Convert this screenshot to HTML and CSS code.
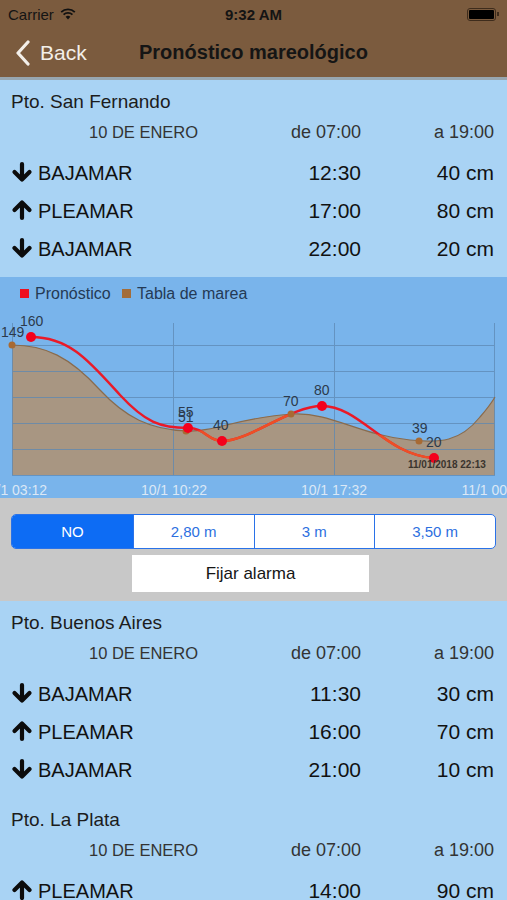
FILE: index.html
```html
<!DOCTYPE html>
<html lang="es">
<head>
    <meta charset="UTF-8">
    <meta name="viewport" content="width=device-width, initial-scale=1.0">
    <title>Pronóstico mareológico</title>
    <link rel="stylesheet" href="styles.css">
</head>
<body>
    <!-- Barra superior -->
    <div class="topbar">
        <div class="status">
            <div class="status-left">
                <span>Carrier</span>
                <svg class="wifi" width="16" height="12" viewBox="0 0 16 12">
                    <path d="M8 11.5 L5.6 8.8 A3.6 3.6 0 0 1 10.4 8.8 Z" fill="#111"/>
                    <path d="M3.6 6.6 A6.4 6.4 0 0 1 12.4 6.6" fill="none" stroke="#111" stroke-width="1.9"/>
                    <path d="M1.2 4.1 A9.8 9.8 0 0 1 14.8 4.1" fill="none" stroke="#111" stroke-width="1.9"/>
                </svg>
            </div>
            <div class="status-time">9:32 AM</div>
            <div class="status-right">
                <div class="battery"><div class="battery-fill"></div></div>
                <div class="battery-tip"></div>
            </div>
        </div>
        <div class="navbar">
            <a class="back" href="#">
                <svg width="16" height="26" viewBox="0 0 16 26">
                    <path d="M13 2 L3 13 L13 24" fill="none" stroke="#f3efe9" stroke-width="3.2" stroke-linecap="round" stroke-linejoin="round"/>
                </svg>
                <span>Back</span>
            </a>
            <div class="nav-title">Pronóstico mareológico</div>
        </div>
    </div>

    <!-- Puerto 1 -->
    <div class="port">
        <div class="port-name">Pto. San Fernando</div>
        <div class="date-row">
            <span class="date-label">10 DE ENERO</span>
            <span class="num">de 07:00</span>
            <span class="num">a 19:00</span>
        </div>
        <div class="tide-row">
            <span class="tide-label"><svg class="arrow" viewBox="0 0 22 22"><path d="M11 3 V18 M3.5 11 L11 18.5 L18.5 11" /></svg>BAJAMAR</span>
            <span class="num">12:30</span>
            <span class="num">40 cm</span>
        </div>
        <div class="tide-row">
            <span class="tide-label"><svg class="arrow" viewBox="0 0 22 22"><path d="M11 19 V4 M3.5 11 L11 3.5 L18.5 11" /></svg>PLEAMAR</span>
            <span class="num">17:00</span>
            <span class="num">80 cm</span>
        </div>
        <div class="tide-row">
            <span class="tide-label"><svg class="arrow" viewBox="0 0 22 22"><path d="M11 3 V18 M3.5 11 L11 18.5 L18.5 11" /></svg>BAJAMAR</span>
            <span class="num">22:00</span>
            <span class="num">20 cm</span>
        </div>
    </div>

    <!-- Grafico -->
    <div class="chart">
        <svg width="507" height="221" viewBox="0 0 507 221">
            <defs>
                <clipPath id="bajo-marea">
                    <path d="M12 68 C45 68 70 80 100 113 C125 140 150 153 187 154 C215 155 240 140 293 137 C330 135 360 158 410 163 C440 166 460 165 480 140 C487 132 492 125 495 120 L495 198 L12 198 Z"/>
                </clipPath>
            </defs>
            <rect x="20" y="12" width="9" height="9" fill="#ee0f1f"/>
            <text x="35" y="22" class="legend">Pronóstico</text>
            <rect x="122" y="12" width="9" height="9" fill="#a36d3a"/>
            <text x="137" y="22" class="legend">Tabla de marea</text>

            <path d="M12 68 C45 68 70 80 100 113 C125 140 150 153 187 154 C215 155 240 140 293 137 C330 135 360 158 410 163 C440 166 460 165 480 140 C487 132 492 125 495 120 L495 198 L12 198 Z" fill="#a89682"/>

            <g stroke="#5d88b3" stroke-width="1" opacity="0.75">
                <line x1="12" y1="68.5" x2="495" y2="68.5"/>
                <line x1="12" y1="94.5" x2="495" y2="94.5"/>
                <line x1="12" y1="120.5" x2="495" y2="120.5"/>
                <line x1="12" y1="146.5" x2="495" y2="146.5"/>
                <line x1="12" y1="172.5" x2="495" y2="172.5"/>
                <line x1="12" y1="198.5" x2="495" y2="198.5"/>
                <line x1="12.5" y1="46" x2="12.5" y2="198"/>
                <line x1="173.5" y1="46" x2="173.5" y2="198"/>
                <line x1="334.5" y1="46" x2="334.5" y2="198"/>
                <line x1="494.5" y1="46" x2="494.5" y2="198"/>
            </g>

            <path d="M12 68 C45 68 70 80 100 113 C125 140 150 153 187 154 C215 155 240 140 293 137 C330 135 360 158 410 163 C440 166 460 165 480 140 C487 132 492 125 495 120" fill="none" stroke="#8a6b4c" stroke-width="1.2"/>

            <path d="M31 60 C70 60 90 85 120 118 C145 145 160 151 188 151 C205 151 208 164 222 164 C250 164 290 129 322 129 C360 129 385 178 434 181" fill="none" stroke="#ea1a28" stroke-width="2.4"/>
            <path d="M31 60 C70 60 90 85 120 118 C145 145 160 151 188 151 C205 151 208 164 222 164 C250 164 290 129 322 129 C360 129 385 178 434 181" fill="none" stroke="#ee4f26" stroke-width="2.4" clip-path="url(#bajo-marea)"/>

            <circle cx="12" cy="68" r="3.5" fill="#a86a33"/>
            <circle cx="186" cy="154" r="3.5" fill="#a86a33"/>
            <circle cx="291" cy="137" r="3.5" fill="#a86a33"/>
            <circle cx="419" cy="164" r="3.5" fill="#a86a33"/>

            <circle cx="31" cy="60" r="5" fill="#f4001c"/>
            <circle cx="188" cy="151" r="5" fill="#f4001c"/>
            <circle cx="222" cy="164" r="5" fill="#f4001c"/>
            <circle cx="322" cy="129" r="5" fill="#f4001c"/>
            <circle cx="434" cy="181" r="5" fill="#f4001c"/>

            <g class="pt-label">
                <text x="1" y="60">149</text>
                <text x="20" y="49">160</text>
                <text x="178" y="140">55</text>
                <text x="178" y="145">51</text>
                <text x="213" y="153">40</text>
                <text x="283" y="129">70</text>
                <text x="314" y="118">80</text>
                <text x="412" y="156">39</text>
                <text x="426" y="170">20</text>
            </g>
            <text x="408" y="191" class="stamp">11/01/2018 22:13</text>

            <g class="axis">
                <text x="14" y="218">10/1 03:12</text>
                <text x="174" y="218">10/1 10:22</text>
                <text x="334" y="218">10/1 17:32</text>
                <text x="494" y="218">11/1 00:42</text>
            </g>
        </svg>
    </div>

    <!-- Alarma -->
    <div class="alarm">
        <div class="segmented">
            <div class="seg seg-on">NO</div>
            <div class="seg">2,80 m</div>
            <div class="seg">3 m</div>
            <div class="seg">3,50 m</div>
        </div>
        <div class="alarm-btn">Fijar alarma</div>
    </div>

    <!-- Puerto 2 -->
    <div class="port">
        <div class="port-name">Pto. Buenos Aires</div>
        <div class="date-row">
            <span class="date-label">10 DE ENERO</span>
            <span class="num">de 07:00</span>
            <span class="num">a 19:00</span>
        </div>
        <div class="tide-row">
            <span class="tide-label"><svg class="arrow" viewBox="0 0 22 22"><path d="M11 3 V18 M3.5 11 L11 18.5 L18.5 11" /></svg>BAJAMAR</span>
            <span class="num">11:30</span>
            <span class="num">30 cm</span>
        </div>
        <div class="tide-row">
            <span class="tide-label"><svg class="arrow" viewBox="0 0 22 22"><path d="M11 19 V4 M3.5 11 L11 3.5 L18.5 11" /></svg>PLEAMAR</span>
            <span class="num">16:00</span>
            <span class="num">70 cm</span>
        </div>
        <div class="tide-row">
            <span class="tide-label"><svg class="arrow" viewBox="0 0 22 22"><path d="M11 3 V18 M3.5 11 L11 18.5 L18.5 11" /></svg>BAJAMAR</span>
            <span class="num">21:00</span>
            <span class="num">10 cm</span>
        </div>
    </div>

    <!-- Puerto 3 -->
    <div class="port">
        <div class="port-name">Pto. La Plata</div>
        <div class="date-row">
            <span class="date-label">10 DE ENERO</span>
            <span class="num">de 07:00</span>
            <span class="num">a 19:00</span>
        </div>
        <div class="tide-row">
            <span class="tide-label"><svg class="arrow" viewBox="0 0 22 22"><path d="M11 19 V4 M3.5 11 L11 3.5 L18.5 11" /></svg>PLEAMAR</span>
            <span class="num">14:00</span>
            <span class="num">90 cm</span>
        </div>
    </div>
</body>
</html>
```

FILE: styles.css
```css
body, html {
    margin: 0;
    padding: 0;
    font-family: "Liberation Sans", Arial, sans-serif;
    background-color: #a9d3f4;
    overflow: hidden;
    height: 900px;
}

/* Barra superior */
.topbar {
    background-color: #7b5b3e;
    border-bottom: 3px solid #97a6b0;
}

.status {
    height: 28px;
    display: flex;
    align-items: center;
    justify-content: space-between;
    padding: 0 8px;
    font-size: 15px;
    color: #141414;
}

.status-left {
    display: flex;
    align-items: center;
    gap: 6px;
    width: 100px;
}

.status-time {
    font-weight: bold;
    font-size: 15px;
}

.status-right {
    width: 100px;
    display: flex;
    justify-content: flex-end;
    align-items: center;
}

.battery {
    width: 25px;
    height: 9px;
    border: 1px solid #3e2c1c;
    border-radius: 3px;
    padding: 1px;
}

.battery-fill {
    width: 100%;
    height: 100%;
    background-color: #000;
    border-radius: 1px;
}

.battery-tip {
    width: 2px;
    height: 4px;
    background-color: #3e2c1c;
    margin-left: 1px;
}

.navbar {
    height: 49px;
    display: flex;
    align-items: center;
    padding-left: 15px;
}

.back {
    display: flex;
    align-items: center;
    gap: 9px;
    color: #f3efe9;
    text-decoration: none;
    font-size: 21px;
    width: 124px;
}

.nav-title {
    font-weight: bold;
    font-size: 20px;
    color: #151515;
}

/* Puerto */
.port {
    padding: 7px 13px 9px 11px;
}

.port-name {
    height: 30px;
    line-height: 30px;
    font-size: 19px;
    color: #1c1c1c;
}

.date-row,
.tide-row {
    display: grid;
    grid-template-columns: 1fr 120px 133px;
    align-items: center;
}

.date-row {
    height: 31px;
    font-size: 18px;
    color: #333;
    margin-bottom: 6px;
}

.date-label {
    padding-left: 78px;
    font-size: 16.5px;
}

.tide-row {
    height: 38px;
    font-size: 20px;
    color: #111;
}

.tide-row .num {
    font-size: 21px;
}

.num {
    text-align: right;
}

.tide-label {
    display: flex;
    align-items: center;
}

.arrow {
    width: 22px;
    height: 22px;
    margin-right: 5px;
    margin-top: -2px;
}

.arrow path {
    fill: none;
    stroke: #0c0c0c;
    stroke-width: 4.2;
    stroke-linecap: round;
    stroke-linejoin: round;
}

/* Grafico */
.chart {
    height: 221px;
    background-color: #79b4eb;
}

.chart svg {
    display: block;
}

.legend {
    font-size: 16px;
    fill: #243a55;
}

.pt-label text {
    font-size: 14px;
    fill: #2c3a4c;
}

.stamp {
    font-size: 10px;
    font-weight: bold;
    fill: #3a342e;
}

.axis text {
    font-size: 14px;
    fill: #dbe8f6;
    text-anchor: middle;
}

/* Alarma */
.alarm {
    background-color: #c8c8c8;
    padding: 16px 11px 9px 11px;
}

.segmented {
    display: grid;
    grid-template-columns: repeat(4, 1fr);
    height: 35px;
    border: 1px solid #2a72e8;
    border-radius: 5px;
    overflow: hidden;
    background-color: #fff;
    box-sizing: border-box;
}

.seg {
    display: flex;
    align-items: center;
    justify-content: center;
    font-size: 15px;
    color: #2d6fe0;
    border-left: 1px solid #2a72e8;
}

.seg:first-child {
    border-left: none;
}

.seg-on {
    background-color: #0d6cf4;
    color: #fff;
}

.alarm-btn {
    margin: 6px 0 0 121px;
    width: 237px;
    height: 37px;
    background-color: #fff;
    display: flex;
    align-items: center;
    justify-content: center;
    font-size: 17px;
    color: #151515;
}
```
